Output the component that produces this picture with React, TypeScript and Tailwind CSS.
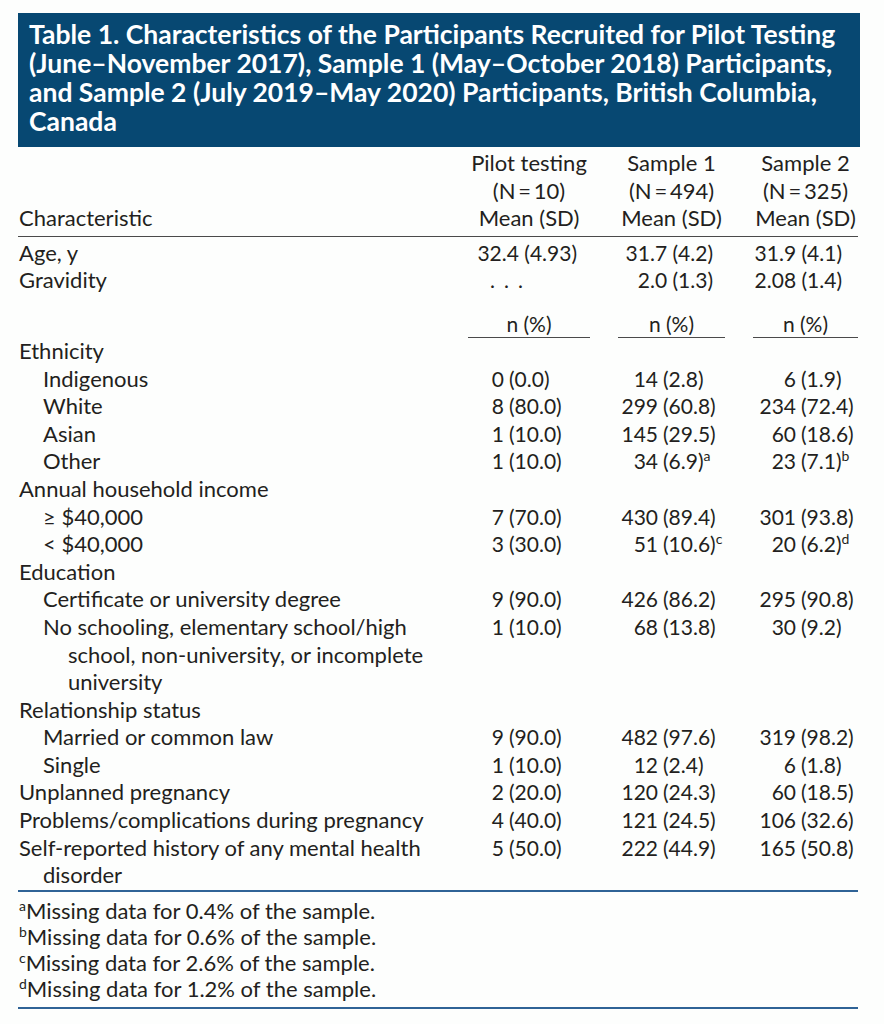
import React from "react";

type Cell = { n: string; p: string; sup?: string };

interface DataRow {
  label: React.ReactNode;
  level: 0 | 1;
  wrap?: boolean;
  cells?: [Cell, Cell, Cell];
}

const numWidth = ["w-[36px]", "w-[40px]", "w-[43px]"];
const colWidth = ["w-[122px]", "w-[107px] ml-[28px]", "w-[105px] ml-[28px]"];

const c = (n: string, p: string, sup?: string): Cell => ({ n, p, sup });

const rows: DataRow[] = [
  { label: "Ethnicity", level: 0 },
  { label: "Indigenous", level: 1, cells: [c("0", "0.0"), c("14", "2.8"), c("6", "1.9")] },
  { label: "White", level: 1, cells: [c("8", "80.0"), c("299", "60.8"), c("234", "72.4")] },
  { label: "Asian", level: 1, cells: [c("1", "10.0"), c("145", "29.5"), c("60", "18.6")] },
  { label: "Other", level: 1, cells: [c("1", "10.0"), c("34", "6.9", "a"), c("23", "7.1", "b")] },
  { label: "Annual household income", level: 0 },
  { label: "≥ $40,000", level: 1, cells: [c("7", "70.0"), c("430", "89.4"), c("301", "93.8")] },
  { label: "< $40,000", level: 1, cells: [c("3", "30.0"), c("51", "10.6", "c"), c("20", "6.2", "d")] },
  { label: "Education", level: 0 },
  {
    label: "Certificate or university degree",
    level: 1,
    cells: [c("9", "90.0"), c("426", "86.2"), c("295", "90.8")],
  },
  {
    label: (
      <>
        No schooling, elementary school/high
        <br />
        school, non-university, or incomplete
        <br />
        university
      </>
    ),
    level: 1,
    wrap: true,
    cells: [c("1", "10.0"), c("68", "13.8"), c("30", "9.2")],
  },
  { label: "Relationship status", level: 0 },
  { label: "Married or common law", level: 1, cells: [c("9", "90.0"), c("482", "97.6"), c("319", "98.2")] },
  { label: "Single", level: 1, cells: [c("1", "10.0"), c("12", "2.4"), c("6", "1.8")] },
  { label: "Unplanned pregnancy", level: 0, cells: [c("2", "20.0"), c("120", "24.3"), c("60", "18.5")] },
  {
    label: "Problems/complications during pregnancy",
    level: 0,
    cells: [c("4", "40.0"), c("121", "24.5"), c("106", "32.6")],
  },
  {
    label: (
      <>
        Self-reported history of any mental health
        <br />
        disorder
      </>
    ),
    level: 0,
    wrap: true,
    cells: [c("5", "50.0"), c("222", "44.9"), c("165", "50.8")],
  },
];

function Sup({ children }: { children: React.ReactNode }) {
  return <sup className="text-[14px] relative top-[-8px] leading-none">{children}</sup>;
}

function labelClass(row: DataRow) {
  if (row.level === 0) return row.wrap ? "pl-[25px] -indent-[24px]" : "pl-[1px]";
  return row.wrap ? "pl-[50px] -indent-[25px]" : "pl-[25px]";
}

function CountCell({ cell, i }: { cell: Cell; i: number }) {
  return (
    <div className={`${colWidth[i]} flex text-[21px]`}>
      <span className={`${numWidth[i]} text-right shrink-0`}>{cell.n}</span>
      <span className="ml-[5px] whitespace-nowrap">
        ({cell.p})
        {cell.sup && <Sup>{cell.sup}</Sup>}
      </span>
    </div>
  );
}

export default function App() {
  return (
    <div className="w-[884px] h-[1024px] bg-[#fdfefd] text-[#231f20] font-['Lato',sans-serif] pt-[13px] overflow-hidden">
      <div className="ml-[18px] w-[842px] bg-[#074872] text-white font-bold text-[26.5px] leading-[29px] pl-[11px] pt-[7px] pb-[11px]">
        Table 1. Characteristics of the Participants Recruited for Pilot Testing
        <br />
        (June–November 2017), Sample 1 (May–October 2018) Participants,
        <br />
        and Sample 2 (July 2019–May 2020) Participants, British Columbia,
        <br />
        Canada
      </div>

      <div className="ml-[18px] w-[842px] pr-[2px] text-[22px] leading-[27.6px]">
        {/* column headers */}
        <div className="flex items-end mt-[2px] pb-[4px] border-b-[1.5px] border-[#4a4a4a]">
          <div className="flex-1 pl-[1px]">Characteristic</div>
          <div className={`${colWidth[0]} text-center`}>
            Pilot testing
            <br />
            (N{"\u2009"}={"\u2009"}10)
            <br />
            Mean (SD)
          </div>
          <div className={`${colWidth[1]} text-center`}>
            Sample 1
            <br />
            (N{"\u2009"}={"\u2009"}494)
            <br />
            Mean (SD)
          </div>
          <div className={`${colWidth[2]} text-center`}>
            Sample 2
            <br />
            (N{"\u2009"}={"\u2009"}325)
            <br />
            Mean (SD)
          </div>
        </div>

        <div className="pt-[2px]">
          <div className="flex">
            <div className="flex-1 pl-[1px]">Age, y</div>
            <div className={`${colWidth[0]} flex justify-end pr-[13px] text-[21px]`}>32.4 (4.93)</div>
            <div className={`${colWidth[1]} flex justify-end pr-[12px] text-[21px]`}>31.7 (4.2)</div>
            <div className={`${colWidth[2]} flex justify-end pr-[16px] text-[21px]`}>31.9 (4.1)</div>
          </div>
          <div className="flex">
            <div className="flex-1 pl-[1px]">Gravidity</div>
            <div className={`${colWidth[0]} pl-[22px] text-[21px] tracking-[9px]`}>...</div>
            <div className={`${colWidth[1]} flex justify-end pr-[12px] text-[21px]`}>2.0 (1.3)</div>
            <div className={`${colWidth[2]} flex justify-end pr-[16px] text-[21px]`}>2.08 (1.4)</div>
          </div>
        </div>

        <div className="flex mt-[16px]">
          <div className="flex-1" />
          {colWidth.map((w, i) => (
            <div key={i} className={`${w} text-center text-[21px] border-b-[1.5px] border-[#4a4a4a] leading-[27px]`}>
              n (%)
            </div>
          ))}
        </div>

        <div className="-mt-[1px] pb-[1px]">
          {rows.map((row, idx) => (
            <div key={idx} className="flex">
              <div className={`flex-1 ${labelClass(row)}`}>{row.label}</div>
              {row.cells ? (
                row.cells.map((cell, i) => <CountCell key={i} cell={cell} i={i} />)
              ) : (
                <div className="w-[290px]" />
              )}
            </div>
          ))}
        </div>

        <div className="border-t-2 border-[#2f6396] pt-[6px] pb-[5px] pl-[1px] leading-[26px]">
          <div>
            <Sup>a</Sup>Missing data for 0.4% of the sample.
          </div>
          <div>
            <Sup>b</Sup>Missing data for 0.6% of the sample.
          </div>
          <div>
            <Sup>c</Sup>Missing data for 2.6% of the sample.
          </div>
          <div>
            <Sup>d</Sup>Missing data for 1.2% of the sample.
          </div>
        </div>
        <div className="border-t-2 border-[#2f6396]" />
      </div>
    </div>
  );
}
